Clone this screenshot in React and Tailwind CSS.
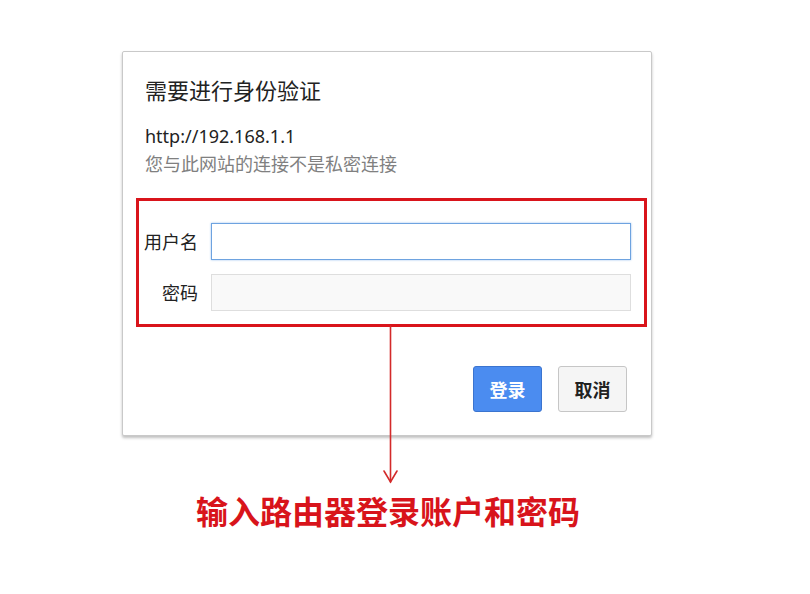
import React from 'react';

const cjk = "font-['Microsoft_YaHei','Noto_Sans_CJK_SC',sans-serif]";

// 输入框一行
const Field = ({ label, focused }) => (
    <>
        <div className="text-right text-[18px] leading-[37px] text-[#222]">{label}</div>
        <div
            className={`h-[37px] w-[420px] border ${
                focused
                    ? 'border-[#6ea3e0] bg-white shadow-[0_0_2px_#9cc2ee]'
                    : 'border-[#dedede] bg-[#f9f9f9]'
            }`}
        />
    </>
);

export default function App() {
    return (
        <div className={`relative w-[810px] h-[594px] bg-white overflow-hidden ${cjk}`}>
            {/* 对话框 */}
            <div className="ml-[122px] mt-[51px] w-[530px] h-[385px] bg-white border border-[#c9c9c9] rounded-[2px] shadow-[0_2px_3px_rgba(0,0,0,0.25)] flex flex-col">
                <div className="pl-[22px] pt-[22px] text-[22px] leading-[30px] text-[#222]">需要进行身份验证</div>
                <div className="pl-[22px] mt-[20px] text-[18px] leading-[24px] text-[#222] font-['Noto_Sans','Noto_Sans_CJK_SC',sans-serif]">
                    http://192.168.1.1
                </div>
                <div className="pl-[22px] mt-[3px] text-[18px] leading-[24px] text-[#808080]">您与此网站的连接不是私密连接</div>

                {/* 红框 */}
                <div className="ml-[13px] mt-[23px] w-[511px] h-[129px] border-[3px] border-[#d9141b] pt-[22px]">
                    <div className="grid grid-cols-[59px_420px] gap-x-[13px] gap-y-[14px]">
                        <Field label="用户名" focused />
                        <Field label="密码" />
                    </div>
                </div>

                {/* 按钮 */}
                <div className="flex justify-end gap-[16px] pr-[24px] mt-[39px]">
                    <button className="w-[69px] h-[46px] rounded-[3px] bg-[#4b8cf0] border border-[#3b74cf] text-white text-[18px] font-bold">
                        登录
                    </button>
                    <button className="w-[69px] h-[46px] rounded-[3px] bg-[#f5f5f5] border border-[#c6c6c6] text-[#222] text-[18px] font-bold">
                        取消
                    </button>
                </div>
            </div>

            {/* 说明文字 */}
            <div className="ml-[196px] mt-[54px] text-[32px] leading-[40px] font-bold text-[#d8141b]">
                输入路由器登录账户和密码
            </div>

            {/* 指示箭头 */}
            <svg className="absolute left-0 top-0" width="810" height="594">
                <g stroke="#d32a2a" strokeWidth="1.6" fill="none" strokeLinecap="round">
                    <line x1="390.5" y1="326" x2="390.5" y2="482" />
                    <polyline points="384,471 390.5,482 397,471" />
                </g>
            </svg>
        </div>
    );
}
